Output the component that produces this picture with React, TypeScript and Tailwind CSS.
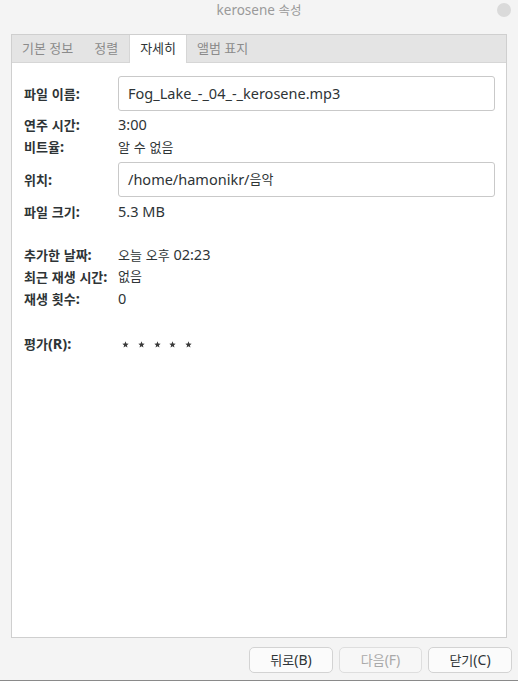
import React from "react";

const font = { fontFamily: '"Noto Sans", "Noto Sans CJK KR", sans-serif' };

function T({ s, latin = "text-[14.5px]" }: { s: string; latin?: string }) {
  const parts = s.match(/[\x00-\x7f]+|[^\x00-\x7f]+/g) || [];
  return (
    <>
      {parts.map((p, i) =>
        /^[\x00-\x7f]+$/.test(p) ? (
          <span key={i} className={latin}>
            {p}
          </span>
        ) : (
          <span key={i}>{p}</span>
        )
      )}
    </>
  );
}

function Label({ s }: { s: string }) {
  return (
    <div className="w-[94px] shrink-0 whitespace-pre font-bold text-[13px] text-[#2e3436]">
      <T s={s} />
    </div>
  );
}

function Row({ label, value, className = "" }: { label: string; value: string; className?: string }) {
  return (
    <div className={`flex h-[22px] items-center ${className}`}>
      <Label s={label} />
      <div className="whitespace-pre text-[13px] text-[#2e3436]">
        <T s={value} />
      </div>
    </div>
  );
}

function InputRow({ label, value, className = "" }: { label: string; value: string; className?: string }) {
  return (
    <div className={`flex h-[35px] items-center ${className}`}>
      <Label s={label} />
      <div className="flex h-[35px] flex-1 items-center whitespace-pre rounded-[3px] border border-[#c9c9c9] bg-white px-[9px] text-[13px] text-[#2e3436]">
        <T s={value} />
      </div>
    </div>
  );
}

export default function App() {
  return (
    <div
      className="flex h-[681px] w-[518px] flex-col border-b border-[#8a8a8a] bg-[#f4f4f4]"
      style={font}
    >
      <div className="relative flex h-[20px] items-center justify-center">
        <span className="whitespace-pre text-[12.5px] text-[#9a9a9a]">
          <T s="kerosene 속성" latin="text-[13.5px]" />
        </span>
        <div className="absolute right-[7px] top-[3px] h-[14px] w-[14px] rounded-full bg-[#dadada]" />
      </div>
      <div className="ml-[11px] mt-[14px] flex h-[604px] w-[496px] flex-col border border-[#cfcfcf] bg-white">
        <div className="flex h-[28px] shrink-0 items-stretch border-b border-[#d6d6d6] bg-[#e4e4e4]">
          <div className="flex items-center px-[10px] text-[13px] text-[#8b8b8b]">기본 정보</div>
          <div className="flex items-center px-[11px] text-[13px] text-[#8b8b8b]">정렬</div>
          <div className="-mb-px flex items-center border-x border-[#d6d6d6] bg-white px-[10px] text-[13px] text-[#2e3436]">자세히</div>
          <div className="flex items-center px-[10px] text-[13px] text-[#8b8b8b]">앨범 표지</div>
        </div>
        <div className="flex flex-1 flex-col pl-[12px] pr-[11px] pt-[13px]">
          <InputRow label="파일 이름:" value="Fog_Lake_-_04_-_kerosene.mp3" />
          <Row label="연주 시간:" value="3:00" className="mt-[3px]" />
          <Row label="비트율:" value="알 수 없음" />
          <InputRow label="위치:" value="/home/hamonikr/음악" className="mt-[4px]" />
          <Row label="파일 크기:" value="5.3 MB" className="mt-[4px]" />
          <Row label="추가한 날짜:" value="오늘 오후 02:23" className="mt-[21px]" />
          <Row label="최근 재생 시간:" value="없음" />
          <Row label="재생 횟수:" value="0" />
          <div className="mt-[23px] flex h-[22px] items-center">
            <Label s="평가(R):" />
            <div className="flex">
              {[0, 1, 2, 3, 4].map((i) => (
                <div key={i} className="flex w-[15.7px] items-center justify-center">
                  <svg width="7" height="7" viewBox="0 0 10 10">
                    <path d="M5 0.5 L6.2 3.6 L9.5 3.8 L7 5.9 L7.8 9.2 L5 7.4 L2.2 9.2 L3 5.9 L0.5 3.8 L3.8 3.6 Z" fill="#3a3a3a" />
                  </svg>
                </div>
              ))}
            </div>
          </div>
        </div>
      </div>
      <div className="mr-[6px] mt-[9px] flex justify-end gap-[6px]">
        <button className="h-[26px] w-[84px] whitespace-pre rounded-[5px] border border-[#d3d3d3] bg-[#fbfbfb] text-[13px] text-[#2e3436]">
          <T s="뒤로(B)" latin="text-[14px]" />
        </button>
        <button className="h-[26px] w-[83px] whitespace-pre rounded-[5px] border border-[#dedede] bg-[#f7f7f7] text-[13px] text-[#a9a9a9]">
          <T s="다음(F)" latin="text-[14px]" />
        </button>
        <button className="h-[26px] w-[84px] whitespace-pre rounded-[5px] border border-[#d3d3d3] bg-[#fbfbfb] text-[13px] text-[#2e3436]">
          <T s="닫기(C)" latin="text-[14px]" />
        </button>
      </div>
    </div>
  );
}
